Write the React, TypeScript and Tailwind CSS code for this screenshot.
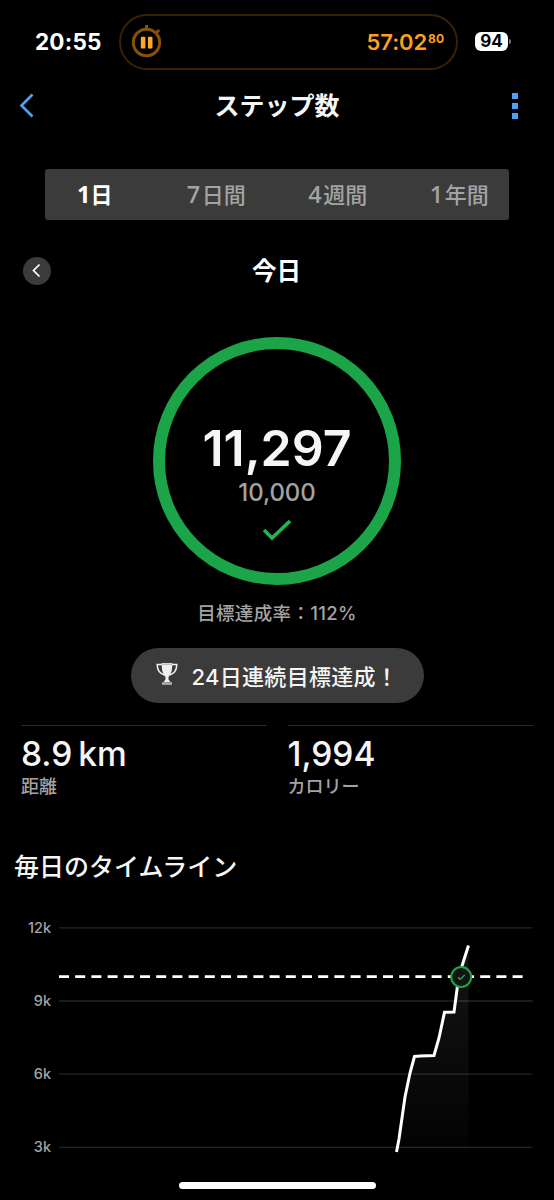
import React from 'react';

const TABS = [
  { digit: '1', label: '日' },
  { digit: '7', label: '日間' },
  { digit: '4', label: '週間' },
  { digit: '1', label: '年間' },
];

const STATS = [
  { value: '8.9 km', label: '距離' },
  { value: '1,994', label: 'カロリー' },
];

const GRID_LINES = [
  { label: '12k', y: 17.8 },
  { label: '9k', y: 91 },
  { label: '6k', y: 164.2 },
  { label: '3k', y: 237.4 },
];

const STEPS_LINE = 'M396.5 242 L399 229 L405 187 L410 163 L414.500 146.500 L420 146 L434 145.500 L439 128 L444.500 102.300 L454 102 L458 72 L462 56 L468.500 35.500';

const StatusBar: React.FC = () => (
  <div className="flex h-[84px] shrink-0 items-start pt-[14px]">
    <div className="flex h-[56px] w-[119px] items-center pl-[35px] text-[22.5px] font-bold leading-none tracking-[0.2px]">20:55</div>
    <div className="flex h-[56px] w-[339px] items-center justify-between rounded-full border-2 border-[#3a2104] pl-[10px] pr-[12px] text-[#ff9f1a]">
      <svg width="32" height="36" viewBox="0 0 32 36" fill="none">
        <circle cx="15.500" cy="18.500" r="13.200" stroke="#875207" strokeWidth="3" />
        <path d="M15.500 5.500V1M25.500 8.500l2.700-2.500" stroke="#875207" strokeWidth="3" />
        <rect x="9.800" y="12.700" width="4.600" height="11.800" rx="1" fill="#ffa929" />
        <rect x="16.900" y="12.700" width="4.600" height="11.800" rx="1" fill="#ffa929" />
      </svg>
      <div className="flex items-start leading-none">
        <span className="text-[22px] font-semibold tracking-[-0.1px]">57:02</span>
        <span className="pt-[2px] pl-[1px] text-[12px] font-bold">80</span>
      </div>
    </div>
    <div className="ml-[17px] flex h-[54px] items-center">
      <div className="flex h-[19px] w-[33px] items-center justify-center rounded-[6px] bg-white text-[17px] font-bold leading-none text-black">94</div>
      <div className="ml-px h-[5px] w-[2px] rounded-r-full bg-[#777]" />
    </div>
  </div>
);

const Header: React.FC = () => (
  <div className="flex h-[44px] shrink-0 items-center justify-between pl-[18px] pr-[36px]">
    <svg className="mb-[3px]" width="18" height="26" viewBox="0 0 18 26" fill="none">
      <path d="M14.500 2.500L3.500 13.500l11 11" stroke="#4f9ff5" strokeWidth="2.700" />
    </svg>
    <h1 className="pl-[6px] pt-px text-[25px] font-bold leading-none text-[#f5f5f5]">ステップ数</h1>
    <div className="mb-px flex w-[6px] flex-col gap-[4px]">
      <i className="h-[6px] bg-[#4f9ff5]" />
      <i className="h-[6px] bg-[#4f9ff5]" />
      <i className="h-[6px] bg-[#4f9ff5]" />
    </div>
  </div>
);

const Tabs: React.FC = () => (
  <div className="mx-[45px] mt-[41px] h-[51px] shrink-0 rounded-[3px] bg-[#3b3b3b]">
    <div className="-ml-[11px] -mr-[11px] grid h-full grid-cols-4 items-center">
      {TABS.map((tab, i) => (
        <div
          key={tab.digit + tab.label}
          className={`flex items-center justify-center text-[22px] leading-none ${i === 0 ? 'font-bold text-white' : 'gap-[1.5px] font-medium text-[#a3a3a3]'}`}
        >
          <span className={`font-['Open_Sans',sans-serif] text-[23.500px] ${i === 0 ? 'font-bold' : 'font-semibold'}`}>{tab.digit}</span>
          <span>{tab.label}</span>
        </div>
      ))}
    </div>
  </div>
);

const StepsRing: React.FC = () => (
  <div className="mx-auto mt-[48px] flex h-[248px] w-[248px] shrink-0 flex-col items-center rounded-full border-[12px] border-[#1ba548] pt-[75px]">
    <div className="text-[50px] font-semibold leading-[48px] text-[#f5f5f5]">11,297</div>
    <div className="mt-[7px] text-[24px] font-medium leading-[28px] tracking-[-0.1px] text-[#a3a3a3]">10,000</div>
    <svg className="mt-[12px]" width="30" height="22" viewBox="0 0 30 22" fill="none">
      <path d="M2 11l8 8L28 2" stroke="#24b552" strokeWidth="3.500" />
    </svg>
  </div>
);

const Trophy: React.FC = () => (
  <svg className="mb-[3px]" width="22" height="24" viewBox="0 0 22 24" fill="none">
    <path d="M6 2.500H1.200C1.200 8 3.500 11.500 8.500 13M16 2.500h4.800c0 5.500-2.300 9-7.300 10.500" stroke="#f0f0f0" strokeWidth="1.500" />
    <path d="M5.800 2.500h10.400c0 5.500-.7 9-3.700 12.500v4h-3v-4c-3-3.500-3.700-7-3.700-12.500z" fill="#f0f0f0" />
    <path d="M5.500 1.800h11" stroke="#f0f0f0" strokeWidth="1.300" />
    <path d="M9.500 17.500h3l2 2.500h-7z" fill="#f0f0f0" />
    <path d="M6 20.300h10v2.500H6z" fill="#b5b5b5" />
  </svg>
);

const Timeline: React.FC = () => (
  <div className="mt-[27px] h-[256px] shrink-0">
    <svg width="554" height="256" viewBox="0 0 554 256" fill="none">
      <defs>
        <linearGradient id="stepsFill" x1="0" y1="35" x2="0" y2="242" gradientUnits="userSpaceOnUse">
          <stop offset="0" stopColor="#fff" stopOpacity="0.080" />
          <stop offset="1" stopColor="#fff" stopOpacity="0.010" />
        </linearGradient>
      </defs>
      {GRID_LINES.map((line) => (
        <g key={line.label}>
          <text x="51" y={line.y + 5} textAnchor="end" fontSize="14.500" fontWeight="500" fill="#a3a3a3">{line.label}</text>
          <path d={`M59 ${line.y}H532.500`} stroke="#242424" strokeWidth="1.300" />
        </g>
      ))}
      <path d={`${STEPS_LINE} V242 Z`} fill="url(#stepsFill)" />
      <path d="M59 66.700H523.500" stroke="#fff" strokeWidth="2.800" strokeDasharray="10 6.200" />
      <path d={STEPS_LINE} stroke="#fff" strokeWidth="3" />
      <circle cx="461.200" cy="67" r="10" fill="#141414" stroke="#1ba548" strokeWidth="2" />
      <path d="M458 67.300l2.200 2.100 4.500-4.500" stroke="#24b552" strokeWidth="1.300" />
    </svg>
  </div>
);

export default function App() {
  return (
    <div className="flex h-[1200px] w-[554px] flex-col overflow-hidden bg-black font-['Inter','Noto_Sans_CJK_JP',sans-serif] text-white" lang="ja">
      <StatusBar />
      <Header />
      <Tabs />

      <div className="mt-[32px] flex h-[37px] shrink-0 items-center pl-[23px] pr-[22px]">
        <div className="flex h-[28px] w-[28px] items-center justify-center rounded-full bg-[#3b3b3b]">
          <svg width="10" height="15" viewBox="0 0 10 15" fill="none">
            <path d="M7.500 1.500l-6 6 6 6" stroke="#fff" strokeWidth="1.700" />
          </svg>
        </div>
        <div className="flex-1 pr-[30px] pt-px text-center text-[24.500px] font-bold leading-none">今日</div>
      </div>

      <StepsRing />
      <div className="mt-[16px] shrink-0 text-center text-[18.500px] font-medium leading-[24px] tracking-[0.35px] text-[#a3a3a3]">目標達成率：112%</div>

      <div className="mx-auto mt-[23px] flex h-[55px] w-[293px] shrink-0 items-center rounded-full bg-[#3b3b3b] pl-[25px] text-[#f5f5f5]">
        <Trophy />
        <span className="ml-[14px] whitespace-nowrap pt-[3px] text-[22px] font-medium leading-none tracking-[0.300px]">24日連続目標達成！</span>
      </div>

      <div className="mt-[22px] grid h-[75px] shrink-0 grid-cols-2 gap-[21px] px-[21px]">
        {STATS.map((stat) => (
          <div key={stat.label} className="border-t border-[#2b2b2b] pt-[10px]">
            <div className="text-[33.500px] font-medium leading-[36px] text-[#f5f5f5] [word-spacing:-3px]">{stat.value}</div>
            <div className="mt-[2px] text-[18px] font-medium leading-[26px] text-[#a3a3a3]">{stat.label}</div>
          </div>
        ))}
      </div>

      <h2 className="mt-[51px] shrink-0 pl-[14px] text-[25px] font-medium leading-[32px] text-[#f5f5f5]">毎日のタイムライン</h2>
      <Timeline />

      <div className="mx-auto mt-[16px] h-[7px] w-[197px] shrink-0 rounded-full bg-white" />
    </div>
  );
}
